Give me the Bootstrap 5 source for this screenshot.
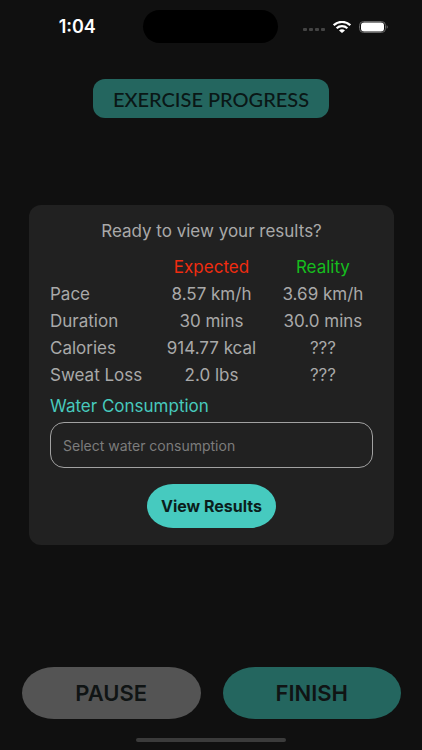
<!DOCTYPE html>
<html lang="en">
<head>
<meta charset="utf-8">
<meta name="viewport" content="width=device-width, initial-scale=1">
<title>Exercise Progress</title>
<link href="https://cdn.jsdelivr.net/npm/bootstrap@5.3.0/dist/css/bootstrap.min.css" rel="stylesheet">
<style>
  body { background: #101010; color: #a9a9a9; font-family: Inter, "Liberation Sans", sans-serif; font-size: 17px; line-height: 20px; }
  .status-bar { padding: 10px 34px 0 22px; }
  .status-side { flex: 1 1 0; }
  .status-time { color: #fff; font-size: 18px; font-weight: 600; padding-right: 10px; }
  .island { width: 135px; height: 33px; background: #000; }
  .signal { margin-top: 7px; }
  .screen-title { margin: 36px 0 0; padding: 8px 20px 7px; border-radius: 12px; background: #24665f; color: #0a1716; font-family: Lato, "Open Sans", sans-serif; font-size: 20px; line-height: 24px; font-weight: 500; }
  .results-card { margin: 87px 28px 0 29px; padding: 16px 21px 17px; border-radius: 12px; background: #212121; }
  .prompt { margin: 0 0 13px; }
  .stats { table-layout: fixed; margin-bottom: 7px; }
  .stats th, .stats td { padding: 3px 0; font-weight: 400; line-height: 21px; text-align: center; white-space: nowrap; }
  .stats tbody th { text-align: left; }
  .col-label { width: 31%; }
  .col-expected { width: 38%; }
  .expected { color: #f02c10; }
  .reality { color: #16bd1e; }
  .water-label { color: #47c9bd; margin-bottom: 6px; }
  .water-select { height: 46px; padding: 0 12px; border: 1px solid #a2a2a2; border-radius: 14px; background: transparent; color: #7c7c7c; font-size: 14px; }
  .btn-results { --bs-btn-bg: #46cabf; --bs-btn-color: #0b1e1c; --bs-btn-hover-bg: #5ad6cb; --bs-btn-hover-color: #0b1e1c; height: 44px; margin-top: 16px; padding: 0 14px; border-radius: 26px / 22px; font-size: 16px; font-weight: 700; }
  .actions { gap: 22px; padding: 0 21px 0 22px; }
  .btn-action { --bs-btn-color: #101414; --bs-btn-hover-color: #101414; flex: 1 1 0; height: 52px; border-radius: 32px / 26px; font-size: 22px; font-weight: 600; }
  .btn-pause { --bs-btn-bg: #545454; --bs-btn-hover-bg: #626262; }
  .btn-finish { --bs-btn-bg: #24665f; --bs-btn-hover-bg: #2c776f; }
  .home-bar { width: 150px; height: 4px; margin: 19px auto 8px; background: #3b3b3b; }
</style>
</head>
<body>
<div class="d-flex flex-column min-vh-100">
  <header class="status-bar d-flex align-items-center">
    <div class="status-side status-time text-center">1:04</div>
    <div class="island rounded-pill"></div>
    <div class="status-side d-flex align-items-center justify-content-end gap-2">
      <svg class="signal" width="22" height="4" viewBox="0 0 22 4" fill="#444" aria-hidden="true"><rect x="0" y="0" width="4" height="3" rx="1"/><rect x="6" y="0" width="4" height="3" rx="1"/><rect x="12" y="0" width="4" height="3" rx="1"/><rect x="18" y="0" width="4" height="3" rx="1"/></svg>
      <svg width="18" height="12" viewBox="0 0 18 12" aria-hidden="true"><g fill="none" stroke="#fff" stroke-width="2.2"><path d="M.7 4.2C5.3-.2 12.7-.2 17.3 4.2"/><path d="M3.6 7.3C6.7 4.5 11.3 4.5 14.4 7.3"/></g><path d="M6 9.4C7.6 8 10.4 8 12 9.4L9 12Z" fill="#fff"/></svg>
      <svg width="29" height="12" viewBox="0 0 29 12" aria-hidden="true"><rect x=".5" y=".5" width="26" height="11" rx="4" fill="none" stroke="#666"/><rect x="2" y="1.5" width="23" height="9" rx="3" fill="#fff"/><path d="M27.6 4.2C29.2 4.8 29.2 7.2 27.6 7.8Z" fill="#666"/></svg>
    </div>
  </header>

  <h1 class="screen-title align-self-center">EXERCISE PROGRESS</h1>

  <main class="results-card">
    <p class="prompt text-center">Ready to view your results?</p>
    <table class="stats w-100">
      <colgroup><col class="col-label"><col class="col-expected"><col></colgroup>
      <thead><tr><td></td><th class="expected" scope="col">Expected</th><th class="reality" scope="col">Reality</th></tr></thead>
      <tbody>
        <tr><th scope="row">Pace</th><td>8.57 km/h</td><td>3.69 km/h</td></tr>
        <tr><th scope="row">Duration</th><td>30 mins</td><td>30.0 mins</td></tr>
        <tr><th scope="row">Calories</th><td>914.77 kcal</td><td>???</td></tr>
        <tr><th scope="row">Sweat Loss</th><td>2.0 lbs</td><td>???</td></tr>
      </tbody>
    </table>
    <label class="water-label d-block" for="water">Water Consumption</label>
    <select class="form-select water-select" id="water"><option>Select water consumption</option></select>
    <div class="text-center"><button type="button" class="btn btn-results border-0">View Results</button></div>
  </main>

  <footer class="mt-auto">
    <div class="actions d-flex">
      <button type="button" class="btn btn-action btn-pause border-0">PAUSE</button>
      <button type="button" class="btn btn-action btn-finish border-0">FINISH</button>
    </div>
    <div class="home-bar rounded-pill"></div>
  </footer>
</div>
<script src="https://cdn.jsdelivr.net/npm/bootstrap@5.3.0/dist/js/bootstrap.bundle.min.js"></script>
</body>
</html>
